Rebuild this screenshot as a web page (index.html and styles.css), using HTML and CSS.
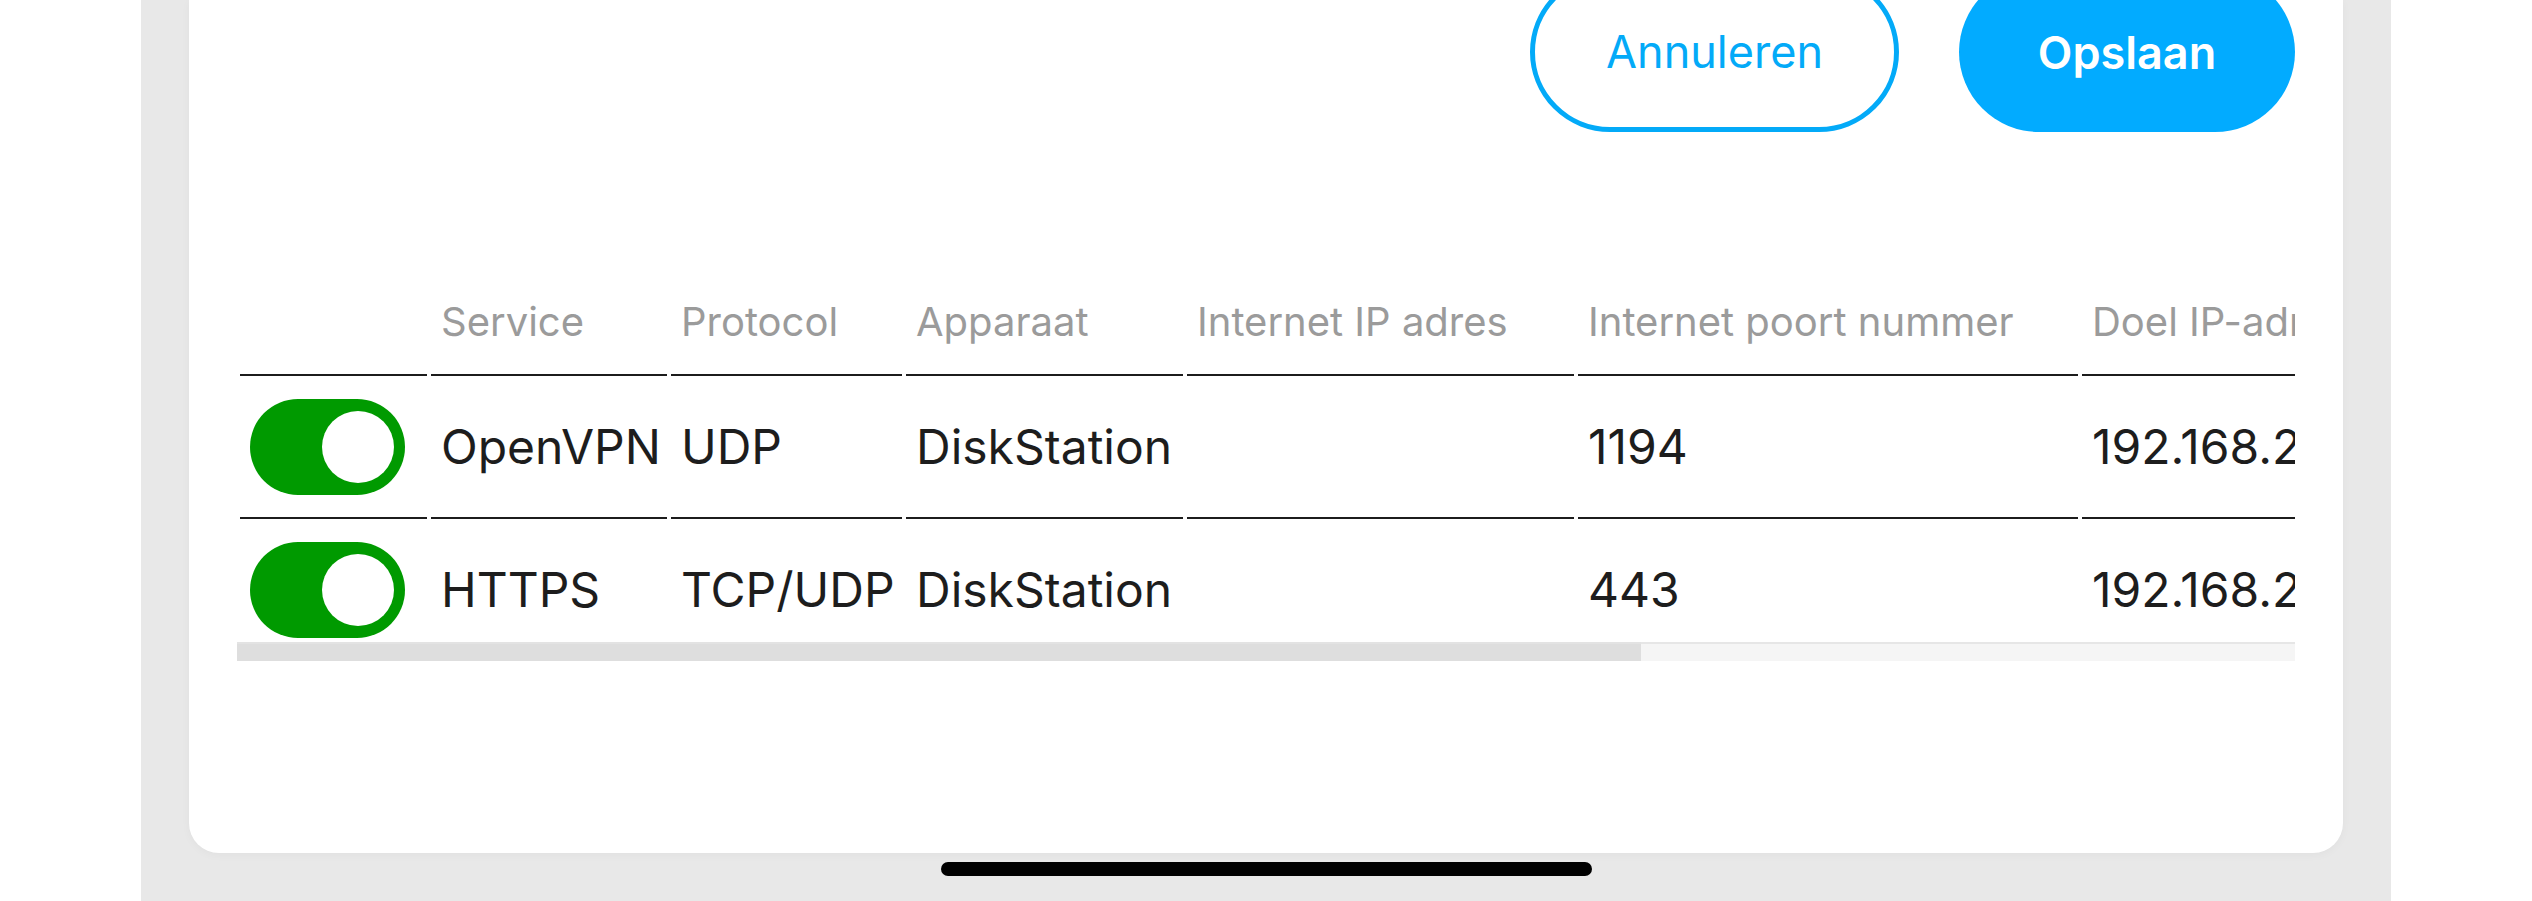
FILE: index.html
```html
<!DOCTYPE html>
<html lang="nl">
<head>
<meta charset="utf-8">
<title>Port forwarding</title>
<link rel="stylesheet" href="styles.css">
</head>
<body>
<div class="frame">
  <div class="card">
    <div class="actions">
      <button class="btn btn-outline">Annuleren</button>
      <button class="btn btn-primary">Opslaan</button>
    </div>
    <div class="table-wrap">
      <table class="rules">
        <thead>
          <tr>
            <th class="c-toggle"></th>
            <th class="c-service">Service</th>
            <th class="c-protocol">Protocol</th>
            <th class="c-device">Apparaat</th>
            <th class="c-ip">Internet IP adres</th>
            <th class="c-port">Internet poort nummer</th>
            <th class="c-target">Doel IP-adres</th>
          </tr>
        </thead>
        <tbody>
          <tr>
            <td><span class="toggle"><span class="knob"></span></span></td>
            <td>OpenVPN</td>
            <td>UDP</td>
            <td>DiskStation</td>
            <td></td>
            <td>1194</td>
            <td>192.168.2.10</td>
          </tr>
          <tr>
            <td><span class="toggle"><span class="knob"></span></span></td>
            <td>HTTPS</td>
            <td>TCP/UDP</td>
            <td>DiskStation</td>
            <td></td>
            <td>443</td>
            <td>192.168.2.10</td>
          </tr>
        </tbody>
      </table>
    </div>
    <div class="scrollbar"><div class="thumb"></div></div>
  </div>
</div>
<div class="home-indicator"></div>
</body>
</html>
```
FILE: styles.css
```css
html, body {
  margin: 0;
  padding: 0;
  background: #ffffff;
  height: 901px;
  overflow: hidden;
  font-family: Inter, "Noto Sans", "Liberation Sans", sans-serif;
}

.frame {
  width: 2250px;
  height: 901px;
  margin: 0 auto;
  background: #e8e8e8;
  box-sizing: border-box;
  padding: 0 48px 48px;
  display: flex;
  flex-direction: column;
}

.card {
  flex: 1;
  background: #ffffff;
  border-radius: 0 0 30px 30px;
  padding: 0 48px;
  box-shadow: 0 2px 10px rgba(0, 0, 0, 0.035);
}

.actions {
  display: flex;
  justify-content: flex-end;
  gap: 60px;
  margin-top: -28px;
}

.btn {
  height: 160px;
  border-radius: 80px;
  box-sizing: border-box;
  font-family: Inter, "Noto Sans", sans-serif;
  font-size: 45px;
  cursor: pointer;
  padding: 0;
}

.btn-outline {
  width: 369px;
  background: #ffffff;
  border: 5px solid #03aaf8;
  color: #03aaf8;
  font-weight: 400;
  padding-bottom: 2px;
}

.btn-primary {
  width: 336px;
  background: #02abff;
  border: none;
  color: #ffffff;
  font-weight: 600;
}

.table-wrap {
  margin-top: 166px;
  height: 344px;
  overflow: hidden;
}

.rules {
  border-collapse: separate;
  border-spacing: 4px 0;
  margin-left: -1px;
  width: max-content;
}

.rules th,
.rules td {
  box-sizing: border-box;
}

.c-toggle { width: 187px; }
.c-service { width: 236px; }
.c-protocol { width: 231px; }
.c-device { width: 277px; }
.c-ip { width: 387px; }
.c-port { width: 500px; }
.c-target { width: 400px; }

.rules th {
  font-size: 40px;
  line-height: 47px;
  font-weight: 400;
  color: #9b9b9b;
  text-align: left;
  padding: 0 0 29px 10px;
  border-bottom: 2px solid #1c1c1c;
  white-space: nowrap;
}

.rules td {
  height: 141px;
  padding: 0 0 0 10px;
  font-size: 48px;
  color: #1d1d1d;
  vertical-align: middle;
  white-space: nowrap;
}

.rules tbody tr:first-child td {
  height: 143px;
  border-bottom: 2px solid #1c1c1c;
}

.toggle {
  display: flex;
  justify-content: flex-end;
  align-items: center;
  width: 155px;
  height: 96px;
  box-sizing: border-box;
  padding: 0 11px;
  border-radius: 48px;
  background: #009a00;
}

.knob {
  width: 72px;
  height: 72px;
  border-radius: 50%;
  background: #ffffff;
}

.scrollbar {
  height: 19px;
  background: #f5f5f5;
  box-shadow: inset 0 2px 0 #e6e6e6;
  display: flex;
}

.thumb {
  width: 1404px;
  background: #dedede;
  box-shadow: inset 0 2px 0 #e3e3e3;
}

.home-indicator {
  position: fixed;
  left: 50%;
  bottom: 25px;
  width: 651px;
  height: 14px;
  margin-left: -325px;
  background: #000000;
  border-radius: 7px;
}
```
